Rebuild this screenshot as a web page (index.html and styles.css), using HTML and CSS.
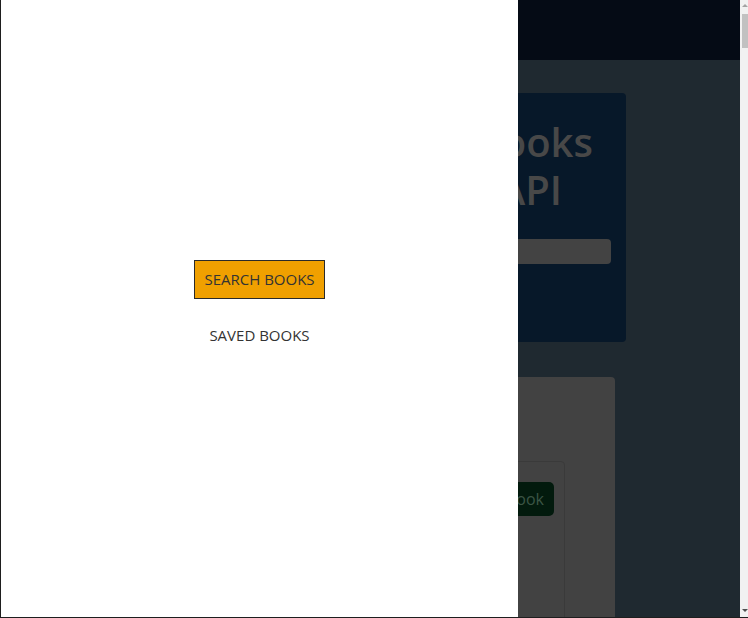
FILE: index.html
```html
<!DOCTYPE html>
<html lang="en">
<head>
<meta charset="utf-8">
<title>Google Books Search</title>
<link rel="stylesheet" href="styles.css">
</head>
<body>
<div class="page">
  <div class="site">
    <header class="nav"></header>
    <main class="main">
      <section class="hero">
        <h1 class="hero-title">
          <span class="line line-1">Books</span>
          <span class="line line-2">API</span>
        </h1>
        <div class="hero-input"></div>
      </section>
      <section class="results">
        <div class="result-card">
          <button class="save-btn" type="button">Save Book</button>
        </div>
      </section>
    </main>
  </div>
  <div class="scrollbar">
    <span class="arrow arrow-up"></span>
    <span class="thumb"></span>
    <span class="track"></span>
    <span class="arrow arrow-down"></span>
  </div>
  <nav class="drawer">
    <a class="drawer-link active" href="#">SEARCH BOOKS</a>
    <a class="drawer-link" href="#">SAVED BOOKS</a>
  </nav>
</div>
</body>
</html>
```

FILE: styles.css
```css
* { box-sizing: border-box; }

html, body {
  margin: 0;
  padding: 0;
  height: 618px;
  overflow: hidden;
  font-family: "Open Sans", "Noto Sans", sans-serif;
}

.page {
  position: relative;
  display: flex;
  height: 618px;
  border-left: 1px solid #1e1e1e;
  border-bottom: 1px solid #1e1e1e;
  background: #1f2930;
}

.site {
  flex: 1;
  display: flex;
  flex-direction: column;
  background: #1f2930;
  overflow: hidden;
}

.nav {
  flex-shrink: 0;
  height: 60px;
  background: #050b15;
}

.main {
  flex-shrink: 0;
  padding: 33px 0 0 125px;
  display: flex;
  flex-direction: column;
  gap: 35px;
}

.hero {
  flex-shrink: 0;
  width: 500px;
  height: 249px;
  background: #071829;
  border-radius: 4px;
  padding: 25px 15px 0 15px;
  display: flex;
  flex-direction: column;
}

.hero-title {
  margin: 0;
  font-size: 40px;
  font-weight: 600;
  line-height: 48px;
  color: #484848;
  text-align: right;
}

.line { display: block; white-space: nowrap; }
.line-1 { padding-right: 18px; }
.line-2 { padding-right: 49px; }

.hero-input {
  margin-top: 25px;
  height: 25px;
  background: #434343;
  border-radius: 4px;
}

.results {
  flex-shrink: 0;
  width: 489px;
  height: 260px;
  background: #424242;
  border-radius: 4px;
  padding: 84px 50px 0 60px;
}

.result-card {
  height: 200px;
  border: 1px solid #3a3a3a;
  border-radius: 4px;
  padding: 20px 10px 0 0;
  display: flex;
  justify-content: flex-end;
  align-items: flex-start;
}

.save-btn {
  height: 34px;
  padding: 0 10px 0 14px;
  border: none;
  border-radius: 5px;
  background: #021a0d;
  color: #3b5545;
  font-family: "Open Sans", "Noto Sans", sans-serif;
  font-size: 16px;
}

.scrollbar {
  width: 8px;
  background: #f1f1f1;
  display: flex;
  flex-direction: column;
  align-items: flex-end;
}

.arrow {
  width: 0;
  height: 0;
  border-left: 3px solid transparent;
  border-right: 3px solid transparent;
}
.arrow-up {
  margin-top: 4px;
  border-bottom: 3px solid #a3a3a3;
}
.arrow-down {
  margin-bottom: 5px;
  border-top: 3px solid #505050;
}
.thumb {
  margin-top: 7px;
  width: 6px;
  height: 34px;
  background: #c1c1c1;
}
.track { flex: 1; }

.drawer {
  position: absolute;
  left: 0;
  top: 0;
  width: 517px;
  height: 617px;
  background: #ffffff;
  display: flex;
  flex-direction: column;
  align-items: center;
  justify-content: center;
  gap: 17px;
  padding-bottom: 2px;
}

.drawer-link {
  display: block;
  height: 39px;
  line-height: 37px;
  padding: 0 9px;
  border: 1px solid transparent;
  color: #333333;
  font-size: 15px;
  text-decoration: none;
  white-space: nowrap;
}

.drawer-link.active {
  background: #f0a000;
  border-color: #2a2a2a;
}
```
